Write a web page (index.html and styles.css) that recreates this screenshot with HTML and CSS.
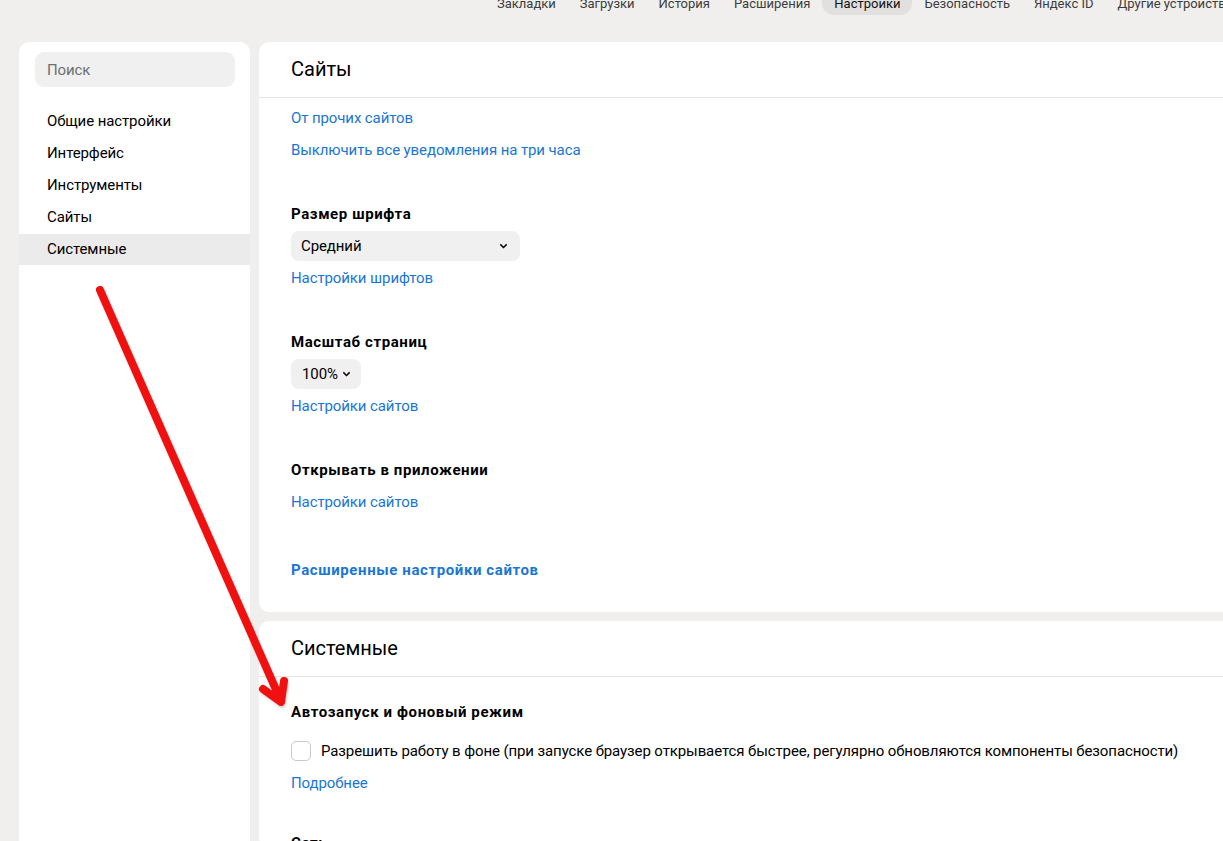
FILE: index.html
```html
<!DOCTYPE html>
<html lang="ru">
<head>
<meta charset="utf-8">
<title>Настройки</title>
<link rel="stylesheet" href="styles.css">
</head>
<body>
<div class="page">
  <nav class="topnav">
    <a class="tab">Закладки</a>
    <a class="tab">Загрузки</a>
    <a class="tab">История</a>
    <a class="tab">Расширения</a>
    <a class="tab active">Настройки</a>
    <a class="tab">Безопасность</a>
    <a class="tab">Яндекс ID</a>
    <a class="tab">Другие устройства</a>
  </nav>
  <div class="layout">
    <aside class="sidebar">
      <div class="search">Поиск</div>
      <ul class="menu">
        <li class="item">Общие настройки</li>
        <li class="item">Интерфейс</li>
        <li class="item">Инструменты</li>
        <li class="item">Сайты</li>
        <li class="item active">Системные</li>
      </ul>
    </aside>
    <main class="main">
      <section class="card">
        <h2 class="card-title">Сайты</h2>
        <div class="card-body">
          <div class="group first">
            <a class="link">От прочих сайтов</a>
            <a class="link">Выключить все уведомления на три часа</a>
          </div>
          <div class="group">
            <h3 class="label">Размер шрифта</h3>
            <div class="select wide"><span>Средний</span><svg class="chev" viewBox="0 0 10 6" width="9" height="6"><path d="M1.5 1.2 5 4.6 8.5 1.2" fill="none" stroke="#000" stroke-width="1.6"/></svg></div>
            <a class="link">Настройки шрифтов</a>
          </div>
          <div class="group">
            <h3 class="label">Масштаб страниц</h3>
            <div class="select narrow"><span>100%</span><svg class="chev" viewBox="0 0 10 6" width="9" height="6"><path d="M1.5 1.2 5 4.6 8.5 1.2" fill="none" stroke="#000" stroke-width="1.6"/></svg></div>
            <a class="link">Настройки сайтов</a>
          </div>
          <div class="group">
            <h3 class="label">Открывать в приложении</h3>
            <a class="link">Настройки сайтов</a>
          </div>
          <div class="group last">
            <a class="link bold">Расширенные настройки сайтов</a>
          </div>
        </div>
      </section>
      <section class="card">
        <h2 class="card-title">Системные</h2>
        <div class="card-body sys">
          <div class="group first">
            <h3 class="label">Автозапуск и фоновый режим</h3>
            <label class="check"><span class="box"></span><span>Разрешить работу в фоне (при запуске браузер открывается быстрее, регулярно обновляются компоненты безопасности)</span></label>
            <a class="link">Подробнее</a>
          </div>
          <div class="group next">
            <h3 class="label">Сеть</h3>
          </div>
        </div>
      </section>
    </main>
  </div>
  <svg class="arrow" width="1223" height="841" viewBox="0 0 1223 841">
    <g fill="none" stroke="#f01010" stroke-width="8" stroke-linecap="round" stroke-linejoin="round">
      <path d="M100 290 L281 701"/>
      <path d="M263 689 L281 702 L284 681"/>
    </g>
  </svg>
</div>
</body>
</html>
```
FILE: styles.css
```css
* { box-sizing: border-box; }
html, body { margin: 0; padding: 0; }
body {
  background: #f0efed;
  font-family: Roboto, "Noto Sans", "Liberation Sans", sans-serif;
  font-size: 15px;
  letter-spacing: -0.1px;
  color: #000;
  overflow: hidden;
  width: 1223px;
  height: 841px;
}
.page { position: relative; height: 841px; overflow: hidden; }
.topnav {
  display: flex;
  height: 42px;
  padding-left: 485px;
  margin: 0;
  white-space: nowrap;
}
.tab {
  display: block;
  height: 26px;
  margin-top: -11px;
  line-height: 30px;
  padding: 0 12px;
  font-size: 13px;
  letter-spacing: 0;
  color: #3c3c3c;
  border-radius: 12px;
}
.tab.active { background: #e1e0de; color: #111; }
.layout {
  display: grid;
  grid-template-columns: 231px 990px;
  column-gap: 9px;
  padding-left: 19px;
}
.sidebar {
  background: #fff;
  border-radius: 10px 10px 0 0;
  height: 820px;
  padding-top: 10px;
}
.search {
  margin: 0 15px 0 16px;
  height: 35px;
  background: #f0f0f0;
  border-radius: 9px;
  color: #6f6f6f;
  padding-left: 12px;
  line-height: 36px;
}
.menu { list-style: none; margin: 18px 0 0; padding: 0; }
.item { height: 32px; line-height: 32px; padding-left: 28px; }
.item.active { background: #ebebeb; height: 31px; line-height: 30px; margin-top: 1px; }
.main { display: flex; flex-direction: column; gap: 9px; }
.card { background: #fff; border-radius: 10px; }
.card-title {
  margin: 0;
  height: 56px;
  line-height: 55px;
  padding-left: 32px;
  font-size: 20px;
  font-weight: 400;
  letter-spacing: 0;
  border-bottom: 1px solid #e4e4e4;
}
.card-body { padding: 4px 32px 26px; }
.card-body.sys { padding-top: 19px; height: 170px; }
.group { display: flex; flex-direction: column; align-items: flex-start; margin-top: 32px; }
.group.first { margin-top: 0; }
.group.last { margin-top: 36px; }
.group.next { margin-top: 28px; }
.label { margin: 0; font-size: 15px; font-weight: 700; line-height: 32px; letter-spacing: 0.6px; }
.link { color: #1a76d2; line-height: 32px; }
.link.bold { font-weight: 700; letter-spacing: 0.6px; }
.select {
  display: flex;
  align-items: center;
  justify-content: space-between;
  height: 30px;
  margin-top: 1px;
  margin-bottom: 1px;
  background: #f0f0f0;
  border-radius: 8px;
  padding: 0 12px 0 10px;
}
.select.wide { width: 229px; }
.select.narrow { width: 70px; padding-left: 11px; padding-right: 10px; }
.chev { display: block; }
.check { display: flex; align-items: center; gap: 10px; height: 32px; margin-top: 7px; }
.box {
  width: 20px; height: 20px;
  border: 1px solid #c9c9c9;
  border-radius: 5px;
  background: #fff;
  flex: none;
}
.arrow { position: absolute; left: 0; top: 0; pointer-events: none; filter: drop-shadow(1px 2px 1px rgba(0,0,0,0.18)); }
```
